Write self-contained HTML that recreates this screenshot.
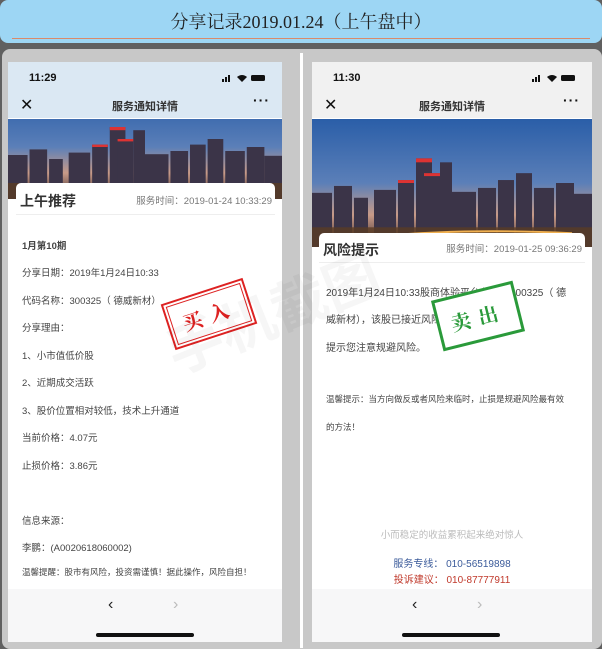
<!DOCTYPE html>
<html><head><meta charset="utf-8">
<style>
*{margin:0;padding:0;box-sizing:border-box}
body{width:602px;height:648px;background:#606060;position:relative;overflow:hidden;font-family:"Liberation Sans","Noto Sans CJK SC",sans-serif;color:#333}
.abs{position:absolute}
#top{left:0;top:0;width:602px;height:43px;background:#9dd6f4;border-radius:8px}
#top .t{position:absolute;left:0;right:0;top:8px;text-align:center;font-family:"Liberation Serif","Noto Serif CJK SC",serif;font-size:18px;color:#222}
#top .ln{position:absolute;left:12px;right:12px;top:38px;height:1px;background:#d98a6a}
#panel{left:2px;top:49px;width:600px;height:600px;background:#c8c8c8;border-radius:8px}
#div{left:300px;top:53px;width:3px;height:595px;background:#fff}
.ph{top:62px;height:580px;background:#fff;overflow:hidden}
.sb{position:absolute;left:0;right:0;top:0;height:56px}
.tm{position:absolute;left:21px;top:10px;font-size:11px;font-weight:bold;color:#111}
.ic{position:absolute;right:12px;top:12px;width:50px;height:8px}
.x{position:absolute;left:12px;top:33px;font-size:16px;color:#111}
.nt{position:absolute;left:0;right:0;top:36px;text-align:center;font-size:11px;font-weight:bold;color:#333}
.dots{position:absolute;right:12px;top:30px;font-size:14px;font-weight:bold;color:#111;letter-spacing:1px}
.card{position:absolute;background:#fff;border-radius:5px 5px 0 0}
.ch{position:absolute;left:0;right:0;top:0;height:32px;border-bottom:1px solid #eee}
.ch b{position:absolute;left:4px;top:8px;font-size:14px;font-weight:bold;color:#333}
.ch span{position:absolute;right:3px;top:10px;font-size:9.5px;color:#777}
.tx{position:absolute;font-size:9.5px;color:#444;white-space:nowrap}
.r .tx{font-size:10px}
.bar{position:absolute;left:0;right:0;bottom:0;height:53px;background:#f7f7f8}
.bar .l{position:absolute;left:100px;top:7px;font-size:16px;color:#222}
.bar .r{position:absolute;left:165px;top:7px;font-size:16px;color:#bbb}
.bar .h{position:absolute;left:88px;bottom:5px;width:98px;height:4px;border-radius:2px;background:#111}
.stamp{position:absolute;border:2px solid;padding:2px;background:#fff}
.stamp div{border:1px solid;width:100%;height:100%;display:flex;align-items:center;justify-content:center;font-size:20px;font-weight:bold;letter-spacing:8px;font-family:"Noto Serif CJK SC",serif}
.wm{position:absolute;font-size:56px;color:rgba(0,0,0,0.035);font-weight:bold;transform:rotate(-22deg);white-space:nowrap}
</style></head><body>
<svg width="0" height="0" style="position:absolute">
<defs>
<linearGradient id="sky" x1="0" y1="0" x2="0" y2="1"><stop offset="0" stop-color="#2a5ea8"/><stop offset="0.5" stop-color="#5b7fb8"/><stop offset="0.75" stop-color="#c89a88"/><stop offset="1" stop-color="#3a2a2a"/></linearGradient>
<g id="city">
<rect width="280" height="130" fill="url(#sky)"/>
<g fill="#3b3448">
<rect x="0" y="75" width="20" height="55"/><rect x="22" y="68" width="18" height="62"/><rect x="42" y="80" width="14" height="50"/>
<rect x="62" y="72" width="22" height="58"/><rect x="86" y="62" width="16" height="68"/><rect x="104" y="40" width="16" height="90"/>
<rect x="112" y="55" width="16" height="75"/><rect x="128" y="44" width="12" height="86"/><rect x="140" y="74" width="24" height="56"/>
<rect x="166" y="70" width="18" height="60"/><rect x="186" y="62" width="16" height="68"/><rect x="204" y="55" width="16" height="75"/>
<rect x="222" y="70" width="20" height="60"/><rect x="244" y="65" width="18" height="65"/><rect x="262" y="76" width="18" height="54"/>
</g>
<g fill="#d33"><rect x="104" y="40" width="16" height="4"/><rect x="112" y="55" width="16" height="3"/><rect x="86" y="62" width="16" height="3"/></g>
<rect x="0" y="110" width="280" height="20" fill="#5a3c24" opacity="0.8"/>
<path d="M40 122 Q140 110 260 116" stroke="#f0b050" stroke-width="2" fill="none"/>
</g>
</defs></svg>

<div id="top" class="abs"><div class="t">分享记录2019.01.24（上午盘中）</div><div class="ln"></div></div>
<div id="panel" class="abs"></div>
<div id="div" class="abs"></div>

<!-- left phone -->
<div class="ph abs" style="left:8px;width:274px">
 <div class="sb" style="background:#dbe8f3">
  <div class="tm">11:29</div>
  <svg class="ic" viewBox="0 0 50 8"><rect x="2" y="5" width="2" height="3" fill="#111"/><rect x="5" y="3" width="2" height="5" fill="#111"/><rect x="8" y="1" width="2" height="7" fill="#111"/><path d="M17 3 Q22 -1 27 3 L22 8Z" fill="#111"/><rect x="31" y="1" width="14" height="6" rx="1.5" fill="#111"/></svg>
  <div class="x">✕</div><div class="nt">服务通知详情</div><div class="dots">···</div>
 </div>
 <svg style="position:absolute;left:0;top:57px" width="274" height="80" viewBox="0 30 280 100" preserveAspectRatio="none"><use href="#city"/></svg>
 <div class="card" style="left:8px;top:121px;width:259px;height:410px">
  <div class="ch"><b>上午推荐</b><span>服务时间：2019-01-24 10:33:29</span></div>
  <div class="tx" style="left:6px;top:55px;font-weight:bold">1月第10期</div>
  <div class="tx" style="left:6px;top:82px">分享日期：2019年1月24日10:33</div>
  <div class="tx" style="left:6px;top:110px">代码名称：300325（ 德威新材）</div>
  <div class="tx" style="left:6px;top:137px">分享理由：</div>
  <div class="tx" style="left:6px;top:165px">1、小市值低价股</div>
  <div class="tx" style="left:6px;top:192px">2、近期成交活跃</div>
  <div class="tx" style="left:6px;top:220px">3、股价位置相对较低，技术上升通道</div>
  <div class="tx" style="left:6px;top:247px">当前价格：4.07元</div>
  <div class="tx" style="left:6px;top:275px">止损价格：3.86元</div>
  <div class="tx" style="left:6px;top:330px">信息来源：</div>
  <div class="tx" style="left:6px;top:357px">李鹏：(A0020618060002)</div>
  <div class="tx" style="left:6px;top:383px;font-size:8.5px">温馨提醒：股市有风险，投资需谨慎！据此操作，风险自担！</div>
 </div>
 <div class="stamp" style="left:158px;top:228px;width:86px;height:48px;color:#d22;border-color:#d22;transform:rotate(-18deg)"><div style="border-color:#d22">买入</div></div>
 <div class="bar"><div class="l">‹</div><div class="r">›</div><div class="h"></div></div>
</div>

<!-- right phone -->
<div class="ph abs r" style="left:312px;width:280px">
 <div class="sb" style="background:#f1f1f1">
  <div class="tm">11:30</div>
  <svg class="ic" viewBox="0 0 50 8"><rect x="2" y="5" width="2" height="3" fill="#111"/><rect x="5" y="3" width="2" height="5" fill="#111"/><rect x="8" y="1" width="2" height="7" fill="#111"/><path d="M17 3 Q22 -1 27 3 L22 8Z" fill="#111"/><rect x="31" y="1" width="14" height="6" rx="1.5" fill="#111"/></svg>
  <div class="x">✕</div><div class="nt">服务通知详情</div><div class="dots">···</div>
 </div>
 <svg style="position:absolute;left:0;top:57px" width="280" height="128" viewBox="0 0 280 130" preserveAspectRatio="none"><use href="#city"/></svg>
 <div class="card" style="left:7px;top:171px;width:266px;height:360px">
  <div class="ch" style="height:30px"><b style="top:7px">风险提示</b><span style="top:8px">服务时间：2019-01-25 09:36:29</span></div>
  <div class="tx" style="left:7px;top:51px">2019年1月24日10:33股商体验平台分享的300325（ 德</div>
  <div class="tx" style="left:7px;top:78px">威新材），该股已接近风险位，跌破3.86元，</div>
  <div class="tx" style="left:7px;top:106px">提示您注意规避风险。</div>
  <div class="tx" style="left:7px;top:160px;font-size:8.5px">温馨提示：当方向做反或者风险来临时，止损是规避风险最有效</div>
  <div class="tx" style="left:7px;top:188px;font-size:8.5px">的方法！</div>
  <div class="tx" style="left:0;right:0;text-align:center;top:294px;color:#bbb;font-size:9.5px">小而稳定的收益累积起来绝对惊人</div>
  <div class="tx" style="left:0;right:0;text-align:center;top:322px;color:#3a5a9a">服务专线：&nbsp;010-56519898</div>
  <div class="tx" style="left:0;right:0;text-align:center;top:338px;color:#c0392b">投诉建议：&nbsp;010-87777911</div>
 </div>
 <div class="stamp" style="left:124px;top:228px;width:84px;height:52px;color:#2a9a3a;border-color:#2a9a3a;border-width:3px;transform:rotate(-14deg)"><div style="border:none">卖出</div></div>
 <div class="bar"><div class="l">‹</div><div class="r">›</div><div class="h" style="left:90px"></div></div>
</div>

<div class="wm" style="left:160px;top:270px">手机截图</div>
</body></html>
